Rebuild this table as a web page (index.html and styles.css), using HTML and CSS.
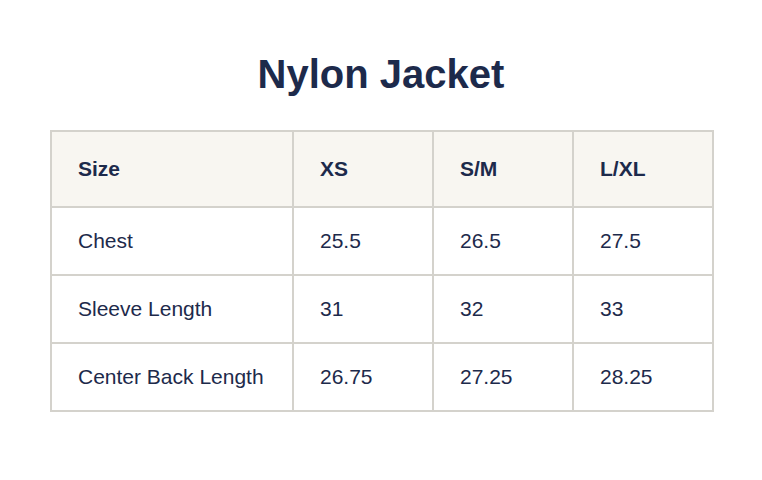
FILE: index.html
```html
<!DOCTYPE html>
<html lang="en">
<head>
<meta charset="utf-8">
<title>Nylon Jacket</title>
<link rel="stylesheet" href="styles.css">
</head>
<body>
<main class="page">
  <h1 class="title">Nylon Jacket</h1>
  <table class="size-table">
    <colgroup>
      <col class="col-label">
      <col class="col-size">
      <col class="col-size">
      <col class="col-size">
    </colgroup>
    <thead>
      <tr>
        <th>Size</th>
        <th>XS</th>
        <th>S/M</th>
        <th>L/XL</th>
      </tr>
    </thead>
    <tbody>
      <tr>
        <td>Chest</td>
        <td>25.5</td>
        <td>26.5</td>
        <td>27.5</td>
      </tr>
      <tr>
        <td>Sleeve Length</td>
        <td>31</td>
        <td>32</td>
        <td>33</td>
      </tr>
      <tr>
        <td>Center Back Length</td>
        <td>26.75</td>
        <td>27.25</td>
        <td>28.25</td>
      </tr>
    </tbody>
  </table>
</main>
</body>
</html>
```

FILE: styles.css
```css
html, body {
  margin: 0;
  padding: 0;
  background: #ffffff;
}

body {
  font-family: "Liberation Sans", Arial, sans-serif;
  color: #1d2a4b;
}

.page {
  padding-top: 51px;
}

.title {
  margin: 0 0 33px;
  font-size: 40px;
  line-height: 46px;
  font-weight: 700;
  text-align: center;
  color: #1d2a4b;
}

.size-table {
  width: 662px;
  margin: 0 50px 0 50px;
  border-collapse: collapse;
  table-layout: fixed;
  border: 2px solid #d4d2cc;
}

.col-label {
  width: 242px;
}

.col-size {
  width: 140px;
}

.size-table th,
.size-table td {
  border: 2px solid #d4d2cc;
  text-align: left;
  vertical-align: middle;
  padding: 0 0 0 26px;
  font-size: 21px;
  line-height: 24px;
}

.size-table th {
  background: #f8f6f1;
  font-weight: 700;
  height: 74px;
}

.size-table td {
  font-weight: 400;
  height: 66px;
}
```
